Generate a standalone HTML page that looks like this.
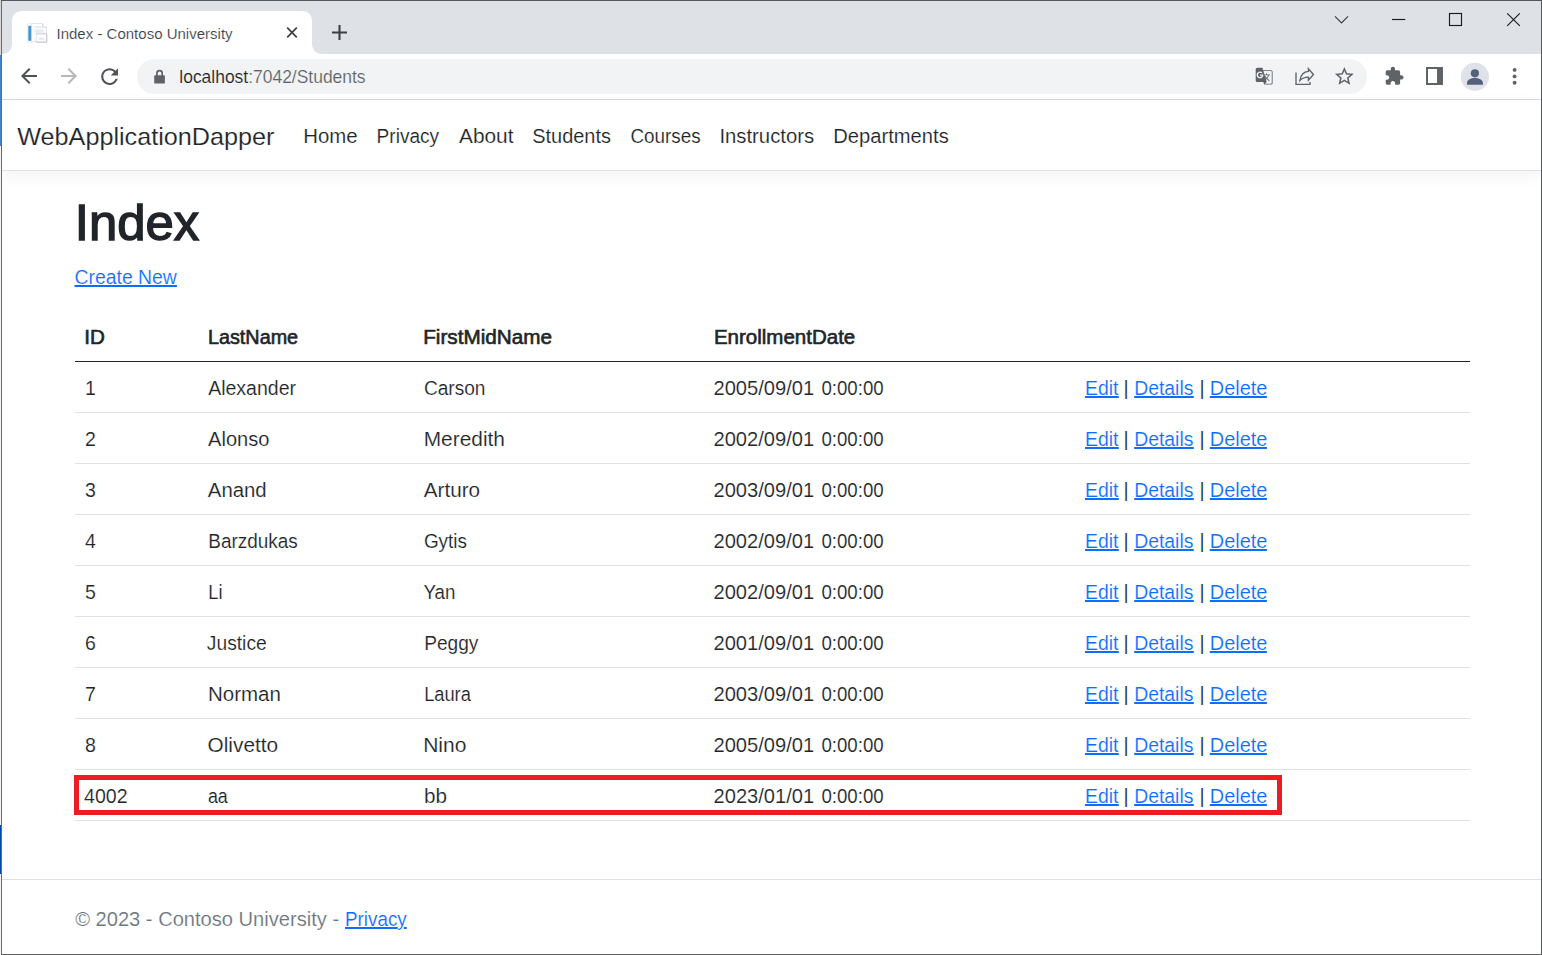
<!DOCTYPE html>
<html lang="en"><head><meta charset="utf-8"><title>Index - Contoso University</title>
<style>
html,body{margin:0;padding:0}
body{width:1542px;height:955px;position:relative;overflow:hidden;background:#fff;font-family:"Liberation Sans",sans-serif;}
.t{position:absolute;white-space:nowrap;line-height:1;transform-origin:0 0;display:block;margin:0;font-weight:400;font-style:normal;text-decoration:none}
.a{position:absolute;display:block}
.hl{position:absolute;left:75px;width:1395px;height:1px;background:#dee2e6}

</style></head>
<body>
<!-- browser frame -->
<div class="a" style="left:0;top:0;width:1542px;height:54px;background:#dee1e6"></div>
<svg class="a" style="left:0;top:0" width="340" height="54" viewBox="0 0 340 54"><path d="M2 54 C8 54 12 50 12 43 V21 C12 15 16 11 22 11 H302 C308 11 312 15 312 21 V43 C312 50 316 54 322 54 Z" fill="#fff"/></svg>
<div class="a" style="left:0;top:54px;width:1542px;height:45px;background:#fff"></div>
<div class="a" style="left:137px;top:59px;width:1230px;height:35px;border-radius:17.5px;background:#f1f3f4"></div>
<div class="a" style="left:0;top:99px;width:1542px;height:1px;background:#dadce0"></div>
<!-- favicon -->
<svg class="a" style="left:26px;top:22px" width="22" height="22" viewBox="0 0 22 22">
<rect x="1.5" y="1.8" width="5" height="18.4" fill="#fff" stroke="#ebebf0" stroke-width=".8"/>
<rect x="2.3" y="3.8" width="3.6" height="15" fill="#4196d6"/>
<path d="M5.6 1.5 H16.6 L20.4 5.3 V19.6 H5.6 Z" fill="#fdfdfe" stroke="#dcdce3" stroke-width=".8"/>
<path d="M16.6 1.5 V5.3 H20.4" fill="#f4f4f8" stroke="#cfcfd8" stroke-width=".7"/>
<rect x="8.3" y="4.2" width="7.2" height="1.6" fill="#e6e8f0"/>
<rect x="8.3" y="7.2" width="9.4" height="3.6" fill="#e9ebf3"/>
<rect x="10.4" y="11.4" width="10.2" height="8.6" fill="#fdfdff" stroke="#dddee6" stroke-width=".8"/>
<rect x="10.4" y="11.2" width="10.2" height="1.2" fill="#d4d5dc"/>
<rect x="13.2" y="15.6" width="5" height="2.4" fill="#e6e8f1"/>
<path d="M10.4 20.2 H20.8 V12" fill="none" stroke="#b9bac4" stroke-width=".8"/>
</svg>
<!-- tab close, new tab -->
<svg class="a" style="left:282px;top:22px" width="20" height="20" viewBox="0 0 20 20"><path d="M5.2 5.7 L14.8 15.3 M14.8 5.7 L5.2 15.3" stroke="#3c4043" stroke-width="1.7" fill="none"/></svg>
<svg class="a" style="left:329px;top:22px" width="22" height="22" viewBox="0 0 22 22"><path d="M3 10.5 H18 M10.5 3 V18" stroke="#3c4043" stroke-width="2.1" fill="none"/></svg>
<!-- window controls -->
<svg class="a" style="left:1325px;top:5px" width="210" height="30" viewBox="0 0 210 30" fill="none" stroke="#1b1b1b" stroke-width="1.15">
<path d="M10 11.4 L16.5 17.9 L23 11.4" stroke="#3c3f43"/>
<path d="M67 14.5 H80.3"/>
<rect x="124.5" y="8.5" width="12" height="12"/>
<path d="M182.2 8.3 L194.8 20.9 M194.8 8.3 L182.2 20.9"/>
</svg>
<!-- nav arrows / reload -->
<svg class="a" style="left:17.3px;top:64px" width="24" height="24" viewBox="0 0 24 24"><path d="M20 11H7.83l5.59-5.59L12 4l-8 8 8 8 1.41-1.41L7.83 13H20v-2z" fill="#4d5156"/></svg>
<svg class="a" style="left:57.4px;top:64px" width="24" height="24" viewBox="0 0 24 24"><path d="M12 4l-1.41 1.41L16.17 11H4v2h12.17l-5.58 5.59L12 20l8-8z" fill="#b5b7ba"/></svg>
<svg class="a" style="left:96.6px;top:63.5px" width="25.2" height="25.2" viewBox="0 0 24 24"><path d="M17.65 6.35C16.2 4.9 14.21 4 12 4c-4.42 0-7.99 3.58-7.99 8s3.57 8 7.99 8c3.73 0 6.84-2.55 7.73-6h-2.08c-.82 2.33-3.04 4-5.65 4-3.31 0-6-2.69-6-6s2.69-6 6-6c1.66 0 3.14.69 4.22 1.78L13 11h7V4l-2.35 2.35z" fill="#50545a"/></svg>
<!-- lock -->
<svg class="a" style="left:150px;top:66px" width="20" height="22" viewBox="0 0 20 22"><rect x="4.2" y="9.2" width="10.7" height="8.4" rx="1.2" fill="#5f6368"/><path d="M6.9 10 V7.3 a2.65 2.65 0 0 1 5.3 0 V10" fill="none" stroke="#5f6368" stroke-width="1.7"/></svg>
<!-- translate -->
<svg class="a" style="left:1254.2px;top:66px" width="20.3" height="20.3" viewBox="0 0 24 24"><path fill="#5f6368" d="M20 5h-9.12L10 2H4c-1.1 0-2 .9-2 2v13c0 1.1.9 2 2 2h7l1 3h8c1.1 0 2-.9 2-2V7c0-1.1-.9-2-2-2zM7.17 14.59c-2.25 0-4.09-1.83-4.09-4.09s1.83-4.09 4.09-4.09c1.04 0 1.99.37 2.74 1.07l.07.06-1.23 1.18-.06-.05c-.29-.27-.78-.59-1.52-.59-1.31 0-2.38 1.09-2.38 2.42s1.07 2.42 2.38 2.42c1.37 0 1.96-.87 2.12-1.46H7.08V9.91h3.95l.01.07c.04.21.05.4.05.61 0 2.35-1.61 4-3.92 4zm6.03-1.71c.33.6.74 1.18 1.19 1.7l-.54.53-.65-2.23zm.77-.76h-.99l-.31-1.04h3.99s-.34 1.31-1.56 2.74c-.52-.62-.89-1.23-1.13-1.7zM21 20c0 .55-.45 1-1 1h-7l2-2-.81-2.77.92-.92L17.79 18l.73-.73-2.71-2.68c.9-1.03 1.6-2.25 1.92-3.51H19v-1.04h-3.64V9h-1.04v1.04h-1.96L11.18 6H20c.55 0 1 .45 1 1v13z"/></svg>
<!-- share -->
<svg class="a" style="left:1290px;top:62px" width="30" height="28" viewBox="0 0 30 28" fill="none" stroke="#5f6368" stroke-width="1.35" stroke-linejoin="miter"><path d="M6 10.6 V22.4 H20 V20"/><path d="M18.4 6.7 L23.5 12.5 L18.4 18.3 V15.1 C14.6 15.1 11.8 16.4 9.9 18.5 C10.6 13.4 13.6 9.8 18.4 9.4 Z"/></svg>
<!-- star -->
<svg class="a" style="left:1332.8px;top:64.9px" width="22.7" height="22.7" viewBox="0 0 24 24"><path fill="#5f6368" d="M22 9.24l-7.19-.62L12 2 9.19 8.63 2 9.24l5.46 4.73L5.82 21 12 17.27 18.18 21l-1.63-7.03L22 9.24zM12 15.4l-3.76 2.27 1-4.28-3.32-2.88 4.38-.38L12 6.1l1.71 4.04 4.38.38-3.32 2.88 1 4.28L12 15.4z"/></svg>
<!-- extensions -->
<svg class="a" style="left:1384.2px;top:66.25px" width="20.35" height="20.35" viewBox="0 0 24 24"><path fill="#5f6368" d="M20.5 11H19V7c0-1.1-.9-2-2-2h-4V3.5C13 2.12 11.88 1 10.5 1S8 2.12 8 3.5V5H4c-1.1 0-1.99.9-1.99 2v3.8H3.5c1.49 0 2.7 1.21 2.7 2.7s-1.21 2.7-2.7 2.7H2V20c0 1.1.9 2 2 2h3.8v-1.5c0-1.49 1.21-2.7 2.7-2.7 1.49 0 2.7 1.21 2.7 2.7V22H17c1.1 0 2-.9 2-2v-4h1.5c1.38 0 2.5-1.12 2.5-2.5S21.88 11 20.5 11z"/></svg>
<!-- side panel -->
<div class="a" style="left:1425.8px;top:67.4px;width:9.2px;height:13.4px;border:2.1px solid #5f6368;border-right-width:6.2px;background:#fff"></div>
<!-- avatar -->
<svg class="a" style="left:1460px;top:62px" width="30" height="30" viewBox="0 0 30 30"><circle cx="14.9" cy="14.9" r="14.1" fill="#dfe2e9"/><circle cx="14.9" cy="11.3" r="4.1" fill="#55617a"/><path d="M7 22.8 V20.6 C7 17.6 11 15.9 14.9 15.9 C18.8 15.9 22.9 17.6 22.9 20.6 V22.8 Z" fill="#55617a"/></svg>
<!-- menu -->
<svg class="a" style="left:1508px;top:64px" width="14" height="24" viewBox="0 0 14 24" fill="#5f6368"><circle cx="6.6" cy="5.9" r="1.95"/><circle cx="6.6" cy="12.4" r="1.95"/><circle cx="6.6" cy="18.7" r="1.95"/></svg>

<!-- navbar border + shadow -->
<div class="a" style="left:2px;top:100px;width:1539px;height:70px;background:#fff;box-shadow:0 5px 15px rgba(0,0,0,.05);border-bottom:1px solid #dee2e6"></div>
<div class="hl" style="top:361px;background:#212529"></div>
<div class="hl" style="top:412px"></div>
<div class="hl" style="top:463px"></div>
<div class="hl" style="top:514px"></div>
<div class="hl" style="top:565px"></div>
<div class="hl" style="top:616px"></div>
<div class="hl" style="top:667px"></div>
<div class="hl" style="top:718px"></div>
<div class="hl" style="top:769px"></div>
<div class="hl" style="top:820px"></div>
<div class="a" style="left:74px;top:775px;width:1198px;height:30px;border:5px solid #ed1c24"></div>
<div class="a" style="left:2px;top:879px;width:1539px;height:1px;background:#dee2e6"></div>

<span class="t" id="tab" style="left:56px;top:26px;font-size:15.4px;color:#3c4043;transform:translateX(0.48px) scaleX(0.9758);-webkit-text-stroke:0.15px #fff;">Index - Contoso University</span>
<span class="t" id="url" style="left:179px;top:68px;font-size:18.2px;color:#5f6368;transform:translateX(0.32px) scaleX(0.9593);-webkit-text-stroke:0.15px #f1f3f4;"><span style="color:#202124">localhost</span>:7042/Students</span>
<a class="t" id="brand" style="left:17px;top:125px;font-size:24.4px;color:#212529;transform:translateX(0.22px) scaleX(1.0330);-webkit-text-stroke:0.15px #fff;">WebApplicationDapper</a>
<a class="t" id="nav0" style="left:303px;top:127px;font-size:19.5px;color:#212529;transform:translateX(0.25px) scaleX(1.0462);-webkit-text-stroke:0.15px #fff;">Home</a>
<a class="t" id="nav1" style="left:376px;top:127px;font-size:19.5px;color:#212529;transform:translateX(0.56px) scaleX(0.9785);-webkit-text-stroke:0.15px #fff;">Privacy</a>
<a class="t" id="nav2" style="left:459px;top:127px;font-size:19.5px;color:#212529;transform:translateX(0.01px) scaleX(1.0677);-webkit-text-stroke:0.15px #fff;">About</a>
<a class="t" id="nav3" style="left:532px;top:127px;font-size:19.5px;color:#212529;transform:translateX(0.21px) scaleX(1.0225);-webkit-text-stroke:0.15px #fff;">Students</a>
<a class="t" id="nav4" style="left:630px;top:127px;font-size:19.5px;color:#212529;transform:translateX(0.45px) scaleX(0.9662);-webkit-text-stroke:0.15px #fff;">Courses</a>
<a class="t" id="nav5" style="left:719px;top:127px;font-size:19.5px;color:#212529;transform:translateX(0.39px) scaleX(1.0407);-webkit-text-stroke:0.15px #fff;">Instructors</a>
<a class="t" id="nav6" style="left:833px;top:127px;font-size:19.5px;color:#212529;transform:translateX(0.29px) scaleX(1.0341);-webkit-text-stroke:0.15px #fff;">Departments</a>
<h1 class="t" id="h1" style="left:74px;top:199px;font-size:49.8px;color:#212529;transform:translateX(0.85px) scaleX(1.0210);-webkit-text-stroke:1.4px #212529;">Index</h1>
<a class="t" id="create" style="left:74px;top:268px;font-size:19.5px;color:#0d6efd;transform:translateX(0.50px) scaleX(0.9941);-webkit-text-stroke:0.15px #fff;padding-bottom:4px;background:linear-gradient(currentColor,currentColor) 0 17px/100% 2px no-repeat;">Create New</a>
<b class="t" id="th0" style="left:84px;top:328px;font-size:19.5px;color:#212529;transform:translateX(0.24px) scaleX(1.0567);-webkit-text-stroke:.6px #212529;">ID</b>
<b class="t" id="th1" style="left:207px;top:328px;font-size:19.5px;color:#212529;transform:translateX(0.96px) scaleX(1.0145);-webkit-text-stroke:.6px #212529;">LastName</b>
<b class="t" id="th2" style="left:423px;top:328px;font-size:19.5px;color:#212529;transform:translateX(0.20px) scaleX(1.0616);-webkit-text-stroke:.6px #212529;">FirstMidName</b>
<b class="t" id="th3" style="left:713px;top:328px;font-size:19.5px;color:#212529;transform:translateX(0.88px) scaleX(1.0521);-webkit-text-stroke:.6px #212529;">EnrollmentDate</b>
<span class="t" id="id0" style="left:85px;top:379px;font-size:19.5px;color:#212529;transform:translateX(0.00px) scaleX(1.0000);-webkit-text-stroke:0.15px #fff;">1</span>
<span class="t" id="ln0" style="left:208px;top:379px;font-size:19.5px;color:#212529;transform:translateX(0.13px) scaleX(1.0006);-webkit-text-stroke:0.15px #fff;">Alexander</span>
<span class="t" id="fn0" style="left:423px;top:379px;font-size:19.5px;color:#212529;transform:translateX(0.92px) scaleX(0.9787);-webkit-text-stroke:0.15px #fff;">Carson</span>
<span class="t" id="dt0" style="left:713px;top:379px;font-size:19.5px;color:#212529;transform:translateX(0.47px) scaleX(1.0323);-webkit-text-stroke:0.15px #fff;">2005/09/01</span>
<span class="t" id="tm0" style="left:821px;top:379px;font-size:19.5px;color:#212529;transform:translateX(0.41px) scaleX(0.9569);-webkit-text-stroke:0.15px #fff;">0:00:00</span>
<a class="t" id="ed0" style="left:1084px;top:379px;font-size:19.5px;color:#0d6efd;transform:translateX(1.00px) scaleX(0.9940);-webkit-text-stroke:0.15px #fff;padding-bottom:4px;background:linear-gradient(currentColor,currentColor) 0 17px/100% 2px no-repeat;">Edit</a>
<span class="t" id="p10" style="left:1123px;top:379px;font-size:19.5px;color:#212529;transform:translateX(0.42px) scaleX(1.0000);-webkit-text-stroke:0.15px #fff;">|</span>
<a class="t" id="de0" style="left:1134px;top:379px;font-size:19.5px;color:#0d6efd;transform:translateX(0.20px) scaleX(0.9932);-webkit-text-stroke:0.15px #fff;padding-bottom:4px;background:linear-gradient(currentColor,currentColor) 0 17px/100% 2px no-repeat;">Details</a>
<span class="t" id="p20" style="left:1199px;top:379px;font-size:19.5px;color:#212529;transform:translateX(0.58px) scaleX(1.0000);-webkit-text-stroke:0.15px #fff;">|</span>
<a class="t" id="dl0" style="left:1209px;top:379px;font-size:19.5px;color:#0d6efd;transform:translateX(0.80px) scaleX(1.0196);-webkit-text-stroke:0.15px #fff;padding-bottom:4px;background:linear-gradient(currentColor,currentColor) 0 17px/100% 2px no-repeat;">Delete</a>
<span class="t" id="id1" style="left:85px;top:430px;font-size:19.5px;color:#212529;transform:translateX(0.00px) scaleX(1.0000);-webkit-text-stroke:0.15px #fff;">2</span>
<span class="t" id="ln1" style="left:208px;top:430px;font-size:19.5px;color:#212529;transform:translateX(0.07px) scaleX(1.0294);-webkit-text-stroke:0.15px #fff;">Alonso</span>
<span class="t" id="fn1" style="left:423px;top:430px;font-size:19.5px;color:#212529;transform:translateX(0.73px) scaleX(1.0705);-webkit-text-stroke:0.15px #fff;">Meredith</span>
<span class="t" id="dt1" style="left:713px;top:430px;font-size:19.5px;color:#212529;transform:translateX(0.47px) scaleX(1.0323);-webkit-text-stroke:0.15px #fff;">2002/09/01</span>
<span class="t" id="tm1" style="left:821px;top:430px;font-size:19.5px;color:#212529;transform:translateX(0.41px) scaleX(0.9569);-webkit-text-stroke:0.15px #fff;">0:00:00</span>
<a class="t" id="ed1" style="left:1084px;top:430px;font-size:19.5px;color:#0d6efd;transform:translateX(1.00px) scaleX(0.9940);-webkit-text-stroke:0.15px #fff;padding-bottom:4px;background:linear-gradient(currentColor,currentColor) 0 17px/100% 2px no-repeat;">Edit</a>
<span class="t" id="p11" style="left:1123px;top:430px;font-size:19.5px;color:#212529;transform:translateX(0.42px) scaleX(1.0000);-webkit-text-stroke:0.15px #fff;">|</span>
<a class="t" id="de1" style="left:1134px;top:430px;font-size:19.5px;color:#0d6efd;transform:translateX(0.20px) scaleX(0.9932);-webkit-text-stroke:0.15px #fff;padding-bottom:4px;background:linear-gradient(currentColor,currentColor) 0 17px/100% 2px no-repeat;">Details</a>
<span class="t" id="p21" style="left:1199px;top:430px;font-size:19.5px;color:#212529;transform:translateX(0.58px) scaleX(1.0000);-webkit-text-stroke:0.15px #fff;">|</span>
<a class="t" id="dl1" style="left:1209px;top:430px;font-size:19.5px;color:#0d6efd;transform:translateX(0.80px) scaleX(1.0196);-webkit-text-stroke:0.15px #fff;padding-bottom:4px;background:linear-gradient(currentColor,currentColor) 0 17px/100% 2px no-repeat;">Delete</a>
<span class="t" id="id2" style="left:85px;top:481px;font-size:19.5px;color:#212529;transform:translateX(0.00px) scaleX(1.0000);-webkit-text-stroke:0.15px #fff;">3</span>
<span class="t" id="ln2" style="left:207px;top:481px;font-size:19.5px;color:#212529;transform:translateX(0.84px) scaleX(1.0428);-webkit-text-stroke:0.15px #fff;">Anand</span>
<span class="t" id="fn2" style="left:423px;top:481px;font-size:19.5px;color:#212529;transform:translateX(0.83px) scaleX(1.0597);-webkit-text-stroke:0.15px #fff;">Arturo</span>
<span class="t" id="dt2" style="left:713px;top:481px;font-size:19.5px;color:#212529;transform:translateX(0.47px) scaleX(1.0323);-webkit-text-stroke:0.15px #fff;">2003/09/01</span>
<span class="t" id="tm2" style="left:821px;top:481px;font-size:19.5px;color:#212529;transform:translateX(0.41px) scaleX(0.9569);-webkit-text-stroke:0.15px #fff;">0:00:00</span>
<a class="t" id="ed2" style="left:1084px;top:481px;font-size:19.5px;color:#0d6efd;transform:translateX(1.00px) scaleX(0.9940);-webkit-text-stroke:0.15px #fff;padding-bottom:4px;background:linear-gradient(currentColor,currentColor) 0 17px/100% 2px no-repeat;">Edit</a>
<span class="t" id="p12" style="left:1123px;top:481px;font-size:19.5px;color:#212529;transform:translateX(0.42px) scaleX(1.0000);-webkit-text-stroke:0.15px #fff;">|</span>
<a class="t" id="de2" style="left:1134px;top:481px;font-size:19.5px;color:#0d6efd;transform:translateX(0.20px) scaleX(0.9932);-webkit-text-stroke:0.15px #fff;padding-bottom:4px;background:linear-gradient(currentColor,currentColor) 0 17px/100% 2px no-repeat;">Details</a>
<span class="t" id="p22" style="left:1199px;top:481px;font-size:19.5px;color:#212529;transform:translateX(0.58px) scaleX(1.0000);-webkit-text-stroke:0.15px #fff;">|</span>
<a class="t" id="dl2" style="left:1209px;top:481px;font-size:19.5px;color:#0d6efd;transform:translateX(0.80px) scaleX(1.0196);-webkit-text-stroke:0.15px #fff;padding-bottom:4px;background:linear-gradient(currentColor,currentColor) 0 17px/100% 2px no-repeat;">Delete</a>
<span class="t" id="id3" style="left:85px;top:532px;font-size:19.5px;color:#212529;transform:translateX(0.00px) scaleX(1.0000);-webkit-text-stroke:0.15px #fff;">4</span>
<span class="t" id="ln3" style="left:208px;top:532px;font-size:19.5px;color:#212529;transform:translateX(0.29px) scaleX(0.9710);-webkit-text-stroke:0.15px #fff;">Barzdukas</span>
<span class="t" id="fn3" style="left:423px;top:532px;font-size:19.5px;color:#212529;transform:translateX(0.91px) scaleX(0.9689);-webkit-text-stroke:0.15px #fff;">Gytis</span>
<span class="t" id="dt3" style="left:713px;top:532px;font-size:19.5px;color:#212529;transform:translateX(0.47px) scaleX(1.0323);-webkit-text-stroke:0.15px #fff;">2002/09/01</span>
<span class="t" id="tm3" style="left:821px;top:532px;font-size:19.5px;color:#212529;transform:translateX(0.41px) scaleX(0.9569);-webkit-text-stroke:0.15px #fff;">0:00:00</span>
<a class="t" id="ed3" style="left:1084px;top:532px;font-size:19.5px;color:#0d6efd;transform:translateX(1.00px) scaleX(0.9940);-webkit-text-stroke:0.15px #fff;padding-bottom:4px;background:linear-gradient(currentColor,currentColor) 0 17px/100% 2px no-repeat;">Edit</a>
<span class="t" id="p13" style="left:1123px;top:532px;font-size:19.5px;color:#212529;transform:translateX(0.42px) scaleX(1.0000);-webkit-text-stroke:0.15px #fff;">|</span>
<a class="t" id="de3" style="left:1134px;top:532px;font-size:19.5px;color:#0d6efd;transform:translateX(0.20px) scaleX(0.9932);-webkit-text-stroke:0.15px #fff;padding-bottom:4px;background:linear-gradient(currentColor,currentColor) 0 17px/100% 2px no-repeat;">Details</a>
<span class="t" id="p23" style="left:1199px;top:532px;font-size:19.5px;color:#212529;transform:translateX(0.58px) scaleX(1.0000);-webkit-text-stroke:0.15px #fff;">|</span>
<a class="t" id="dl3" style="left:1209px;top:532px;font-size:19.5px;color:#0d6efd;transform:translateX(0.80px) scaleX(1.0196);-webkit-text-stroke:0.15px #fff;padding-bottom:4px;background:linear-gradient(currentColor,currentColor) 0 17px/100% 2px no-repeat;">Delete</a>
<span class="t" id="id4" style="left:85px;top:583px;font-size:19.5px;color:#212529;transform:translateX(0.00px) scaleX(1.0000);-webkit-text-stroke:0.15px #fff;">5</span>
<span class="t" id="ln4" style="left:208px;top:583px;font-size:19.5px;color:#212529;transform:translateX(0.30px) scaleX(0.9321);-webkit-text-stroke:0.15px #fff;">Li</span>
<span class="t" id="fn4" style="left:423px;top:583px;font-size:19.5px;color:#212529;transform:translateX(0.42px) scaleX(0.9609);-webkit-text-stroke:0.15px #fff;">Yan</span>
<span class="t" id="dt4" style="left:713px;top:583px;font-size:19.5px;color:#212529;transform:translateX(0.47px) scaleX(1.0323);-webkit-text-stroke:0.15px #fff;">2002/09/01</span>
<span class="t" id="tm4" style="left:821px;top:583px;font-size:19.5px;color:#212529;transform:translateX(0.41px) scaleX(0.9569);-webkit-text-stroke:0.15px #fff;">0:00:00</span>
<a class="t" id="ed4" style="left:1084px;top:583px;font-size:19.5px;color:#0d6efd;transform:translateX(1.00px) scaleX(0.9940);-webkit-text-stroke:0.15px #fff;padding-bottom:4px;background:linear-gradient(currentColor,currentColor) 0 17px/100% 2px no-repeat;">Edit</a>
<span class="t" id="p14" style="left:1123px;top:583px;font-size:19.5px;color:#212529;transform:translateX(0.42px) scaleX(1.0000);-webkit-text-stroke:0.15px #fff;">|</span>
<a class="t" id="de4" style="left:1134px;top:583px;font-size:19.5px;color:#0d6efd;transform:translateX(0.20px) scaleX(0.9932);-webkit-text-stroke:0.15px #fff;padding-bottom:4px;background:linear-gradient(currentColor,currentColor) 0 17px/100% 2px no-repeat;">Details</a>
<span class="t" id="p24" style="left:1199px;top:583px;font-size:19.5px;color:#212529;transform:translateX(0.58px) scaleX(1.0000);-webkit-text-stroke:0.15px #fff;">|</span>
<a class="t" id="dl4" style="left:1209px;top:583px;font-size:19.5px;color:#0d6efd;transform:translateX(0.80px) scaleX(1.0196);-webkit-text-stroke:0.15px #fff;padding-bottom:4px;background:linear-gradient(currentColor,currentColor) 0 17px/100% 2px no-repeat;">Delete</a>
<span class="t" id="id5" style="left:85px;top:634px;font-size:19.5px;color:#212529;transform:translateX(0.00px) scaleX(1.0000);-webkit-text-stroke:0.15px #fff;">6</span>
<span class="t" id="ln5" style="left:206px;top:634px;font-size:19.5px;color:#212529;transform:translateX(0.87px) scaleX(0.9858);-webkit-text-stroke:0.15px #fff;">Justice</span>
<span class="t" id="fn5" style="left:424px;top:634px;font-size:19.5px;color:#212529;transform:translateX(0.19px) scaleX(0.9784);-webkit-text-stroke:0.15px #fff;">Peggy</span>
<span class="t" id="dt5" style="left:713px;top:634px;font-size:19.5px;color:#212529;transform:translateX(0.47px) scaleX(1.0323);-webkit-text-stroke:0.15px #fff;">2001/09/01</span>
<span class="t" id="tm5" style="left:821px;top:634px;font-size:19.5px;color:#212529;transform:translateX(0.41px) scaleX(0.9569);-webkit-text-stroke:0.15px #fff;">0:00:00</span>
<a class="t" id="ed5" style="left:1084px;top:634px;font-size:19.5px;color:#0d6efd;transform:translateX(1.00px) scaleX(0.9940);-webkit-text-stroke:0.15px #fff;padding-bottom:4px;background:linear-gradient(currentColor,currentColor) 0 17px/100% 2px no-repeat;">Edit</a>
<span class="t" id="p15" style="left:1123px;top:634px;font-size:19.5px;color:#212529;transform:translateX(0.42px) scaleX(1.0000);-webkit-text-stroke:0.15px #fff;">|</span>
<a class="t" id="de5" style="left:1134px;top:634px;font-size:19.5px;color:#0d6efd;transform:translateX(0.20px) scaleX(0.9932);-webkit-text-stroke:0.15px #fff;padding-bottom:4px;background:linear-gradient(currentColor,currentColor) 0 17px/100% 2px no-repeat;">Details</a>
<span class="t" id="p25" style="left:1199px;top:634px;font-size:19.5px;color:#212529;transform:translateX(0.58px) scaleX(1.0000);-webkit-text-stroke:0.15px #fff;">|</span>
<a class="t" id="dl5" style="left:1209px;top:634px;font-size:19.5px;color:#0d6efd;transform:translateX(0.80px) scaleX(1.0196);-webkit-text-stroke:0.15px #fff;padding-bottom:4px;background:linear-gradient(currentColor,currentColor) 0 17px/100% 2px no-repeat;">Delete</a>
<span class="t" id="id6" style="left:85px;top:685px;font-size:19.5px;color:#212529;transform:translateX(0.00px) scaleX(1.0000);-webkit-text-stroke:0.15px #fff;">7</span>
<span class="t" id="ln6" style="left:207px;top:685px;font-size:19.5px;color:#212529;transform:translateX(0.90px) scaleX(1.0521);-webkit-text-stroke:0.15px #fff;">Norman</span>
<span class="t" id="fn6" style="left:424px;top:685px;font-size:19.5px;color:#212529;transform:translateX(0.13px) scaleX(0.9372);-webkit-text-stroke:0.15px #fff;">Laura</span>
<span class="t" id="dt6" style="left:713px;top:685px;font-size:19.5px;color:#212529;transform:translateX(0.47px) scaleX(1.0323);-webkit-text-stroke:0.15px #fff;">2003/09/01</span>
<span class="t" id="tm6" style="left:821px;top:685px;font-size:19.5px;color:#212529;transform:translateX(0.41px) scaleX(0.9569);-webkit-text-stroke:0.15px #fff;">0:00:00</span>
<a class="t" id="ed6" style="left:1084px;top:685px;font-size:19.5px;color:#0d6efd;transform:translateX(1.00px) scaleX(0.9940);-webkit-text-stroke:0.15px #fff;padding-bottom:4px;background:linear-gradient(currentColor,currentColor) 0 17px/100% 2px no-repeat;">Edit</a>
<span class="t" id="p16" style="left:1123px;top:685px;font-size:19.5px;color:#212529;transform:translateX(0.42px) scaleX(1.0000);-webkit-text-stroke:0.15px #fff;">|</span>
<a class="t" id="de6" style="left:1134px;top:685px;font-size:19.5px;color:#0d6efd;transform:translateX(0.20px) scaleX(0.9932);-webkit-text-stroke:0.15px #fff;padding-bottom:4px;background:linear-gradient(currentColor,currentColor) 0 17px/100% 2px no-repeat;">Details</a>
<span class="t" id="p26" style="left:1199px;top:685px;font-size:19.5px;color:#212529;transform:translateX(0.58px) scaleX(1.0000);-webkit-text-stroke:0.15px #fff;">|</span>
<a class="t" id="dl6" style="left:1209px;top:685px;font-size:19.5px;color:#0d6efd;transform:translateX(0.80px) scaleX(1.0196);-webkit-text-stroke:0.15px #fff;padding-bottom:4px;background:linear-gradient(currentColor,currentColor) 0 17px/100% 2px no-repeat;">Delete</a>
<span class="t" id="id7" style="left:85px;top:736px;font-size:19.5px;color:#212529;transform:translateX(0.00px) scaleX(1.0000);-webkit-text-stroke:0.15px #fff;">8</span>
<span class="t" id="ln7" style="left:207px;top:736px;font-size:19.5px;color:#212529;transform:translateX(0.56px) scaleX(1.0668);-webkit-text-stroke:0.15px #fff;">Olivetto</span>
<span class="t" id="fn7" style="left:423px;top:736px;font-size:19.5px;color:#212529;transform:translateX(0.19px) scaleX(1.0783);-webkit-text-stroke:0.15px #fff;">Nino</span>
<span class="t" id="dt7" style="left:713px;top:736px;font-size:19.5px;color:#212529;transform:translateX(0.47px) scaleX(1.0323);-webkit-text-stroke:0.15px #fff;">2005/09/01</span>
<span class="t" id="tm7" style="left:821px;top:736px;font-size:19.5px;color:#212529;transform:translateX(0.41px) scaleX(0.9569);-webkit-text-stroke:0.15px #fff;">0:00:00</span>
<a class="t" id="ed7" style="left:1084px;top:736px;font-size:19.5px;color:#0d6efd;transform:translateX(1.00px) scaleX(0.9940);-webkit-text-stroke:0.15px #fff;padding-bottom:4px;background:linear-gradient(currentColor,currentColor) 0 17px/100% 2px no-repeat;">Edit</a>
<span class="t" id="p17" style="left:1123px;top:736px;font-size:19.5px;color:#212529;transform:translateX(0.42px) scaleX(1.0000);-webkit-text-stroke:0.15px #fff;">|</span>
<a class="t" id="de7" style="left:1134px;top:736px;font-size:19.5px;color:#0d6efd;transform:translateX(0.20px) scaleX(0.9932);-webkit-text-stroke:0.15px #fff;padding-bottom:4px;background:linear-gradient(currentColor,currentColor) 0 17px/100% 2px no-repeat;">Details</a>
<span class="t" id="p27" style="left:1199px;top:736px;font-size:19.5px;color:#212529;transform:translateX(0.58px) scaleX(1.0000);-webkit-text-stroke:0.15px #fff;">|</span>
<a class="t" id="dl7" style="left:1209px;top:736px;font-size:19.5px;color:#0d6efd;transform:translateX(0.80px) scaleX(1.0196);-webkit-text-stroke:0.15px #fff;padding-bottom:4px;background:linear-gradient(currentColor,currentColor) 0 17px/100% 2px no-repeat;">Delete</a>
<span class="t" id="id8" style="left:84px;top:787px;font-size:19.5px;color:#212529;transform:translateX(0.11px) scaleX(1.0033);-webkit-text-stroke:0.15px #fff;">4002</span>
<span class="t" id="ln8" style="left:207px;top:787px;font-size:19.5px;color:#212529;transform:translateX(0.93px) scaleX(0.9170);-webkit-text-stroke:0.15px #fff;">aa</span>
<span class="t" id="fn8" style="left:423px;top:787px;font-size:19.5px;color:#212529;transform:translateX(0.92px) scaleX(1.0589);-webkit-text-stroke:0.15px #fff;">bb</span>
<span class="t" id="dt8" style="left:713px;top:787px;font-size:19.5px;color:#212529;transform:translateX(0.60px) scaleX(1.0301);-webkit-text-stroke:0.15px #fff;">2023/01/01</span>
<span class="t" id="tm8" style="left:821px;top:787px;font-size:19.5px;color:#212529;transform:translateX(0.41px) scaleX(0.9569);-webkit-text-stroke:0.15px #fff;">0:00:00</span>
<a class="t" id="ed8" style="left:1084px;top:787px;font-size:19.5px;color:#0d6efd;transform:translateX(1.00px) scaleX(0.9940);-webkit-text-stroke:0.15px #fff;padding-bottom:4px;background:linear-gradient(currentColor,currentColor) 0 17px/100% 2px no-repeat;">Edit</a>
<span class="t" id="p18" style="left:1123px;top:787px;font-size:19.5px;color:#212529;transform:translateX(0.42px) scaleX(1.0000);-webkit-text-stroke:0.15px #fff;">|</span>
<a class="t" id="de8" style="left:1134px;top:787px;font-size:19.5px;color:#0d6efd;transform:translateX(0.20px) scaleX(0.9932);-webkit-text-stroke:0.15px #fff;padding-bottom:4px;background:linear-gradient(currentColor,currentColor) 0 17px/100% 2px no-repeat;">Details</a>
<span class="t" id="p28" style="left:1199px;top:787px;font-size:19.5px;color:#212529;transform:translateX(0.58px) scaleX(1.0000);-webkit-text-stroke:0.15px #fff;">|</span>
<a class="t" id="dl8" style="left:1209px;top:787px;font-size:19.5px;color:#0d6efd;transform:translateX(0.80px) scaleX(1.0196);-webkit-text-stroke:0.15px #fff;padding-bottom:4px;background:linear-gradient(currentColor,currentColor) 0 17px/100% 2px no-repeat;">Delete</a>
<span class="t" id="foot" style="left:75px;top:910px;font-size:19.5px;color:#6c757d;transform:translateX(0.13px) scaleX(1.0311);-webkit-text-stroke:0.15px #fff;">&copy; 2023 - Contoso University -</span>
<a class="t" id="fpriv" style="left:345px;top:910px;font-size:19.5px;color:#0d6efd;transform:translateX(0.01px) scaleX(0.9650);-webkit-text-stroke:0.15px #fff;padding-bottom:4px;background:linear-gradient(currentColor,currentColor) 0 17px/54.6px 2px no-repeat,linear-gradient(currentColor,currentColor) 60.7px 17px/3.1px 2px no-repeat;">Privacy</a>
<!-- window border + sliver of desktop on the left -->
<div class="a" style="left:0;top:0;width:1px;height:955px;background:linear-gradient(#d6d6d6 0,#d6d6d6 55px,#4a80c4 55px,#4a80c4 146px,#f3f3f3 146px,#f3f3f3 825px,#0a46b0 825px,#0a46b0 874px,#f3f3f3 874px)"></div>
<div class="a" style="left:1px;top:0;width:1px;height:955px;background:#6b6b6b"></div>
<div class="a" style="left:1541px;top:0;width:1px;height:955px;background:#55575b"></div>
<div class="a" style="left:1px;top:0;width:1541px;height:1px;background:#55575a"></div>
<div class="a" style="left:1px;top:954px;width:1541px;height:1px;background:#626262"></div>

</body></html>
